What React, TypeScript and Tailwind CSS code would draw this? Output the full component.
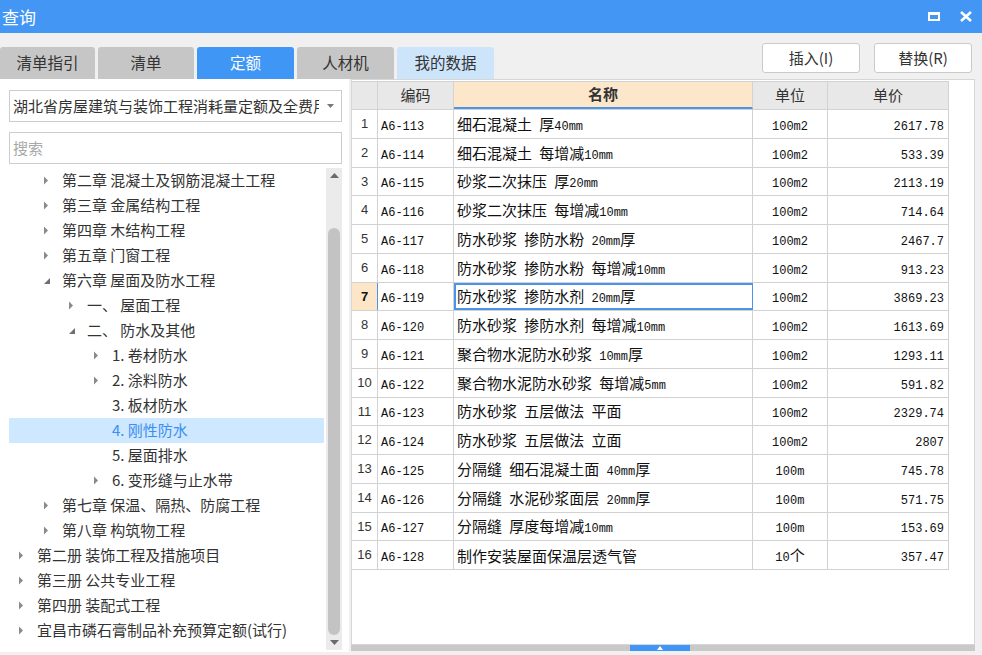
import type { ReactNode } from 'react';

type TreeNode = {
    level: number;
    text: string;
    arrow?: 'right' | 'down';
    selected?: boolean;
};

type Row = [string, string, string, string];

const tabs = [
    { label: '清单指引', width: 'w-[95px]', tone: 'gray' },
    { label: '清单', width: 'w-[96px]', tone: 'gray' },
    { label: '定额', width: 'w-[97px]', tone: 'active' },
    { label: '人材机', width: 'w-[97px]', tone: 'gray' },
    { label: '我的数据', width: 'w-[97px]', tone: 'light' },
];

const tree: TreeNode[] = [
    { level: 1, text: '第二章 混凝土及钢筋混凝土工程', arrow: 'right' },
    { level: 1, text: '第三章 金属结构工程', arrow: 'right' },
    { level: 1, text: '第四章 木结构工程', arrow: 'right' },
    { level: 1, text: '第五章 门窗工程', arrow: 'right' },
    { level: 1, text: '第六章 屋面及防水工程', arrow: 'down' },
    { level: 2, text: '一、 屋面工程', arrow: 'right' },
    { level: 2, text: '二、 防水及其他', arrow: 'down' },
    { level: 3, text: '1. 卷材防水', arrow: 'right' },
    { level: 3, text: '2. 涂料防水', arrow: 'right' },
    { level: 3, text: '3. 板材防水' },
    { level: 3, text: '4. 刚性防水', selected: true },
    { level: 3, text: '5. 屋面排水' },
    { level: 3, text: '6. 变形缝与止水带', arrow: 'right' },
    { level: 1, text: '第七章 保温、隔热、防腐工程', arrow: 'right' },
    { level: 1, text: '第八章 构筑物工程', arrow: 'right' },
    { level: 0, text: '第二册 装饰工程及措施项目', arrow: 'right' },
    { level: 0, text: '第三册 公共专业工程', arrow: 'right' },
    { level: 0, text: '第四册 装配式工程', arrow: 'right' },
    { level: 0, text: '宜昌市磷石膏制品补充预算定额(试行)', arrow: 'right' },
];

const rows: Row[] = [
    ['A6-113', '细石混凝土 厚40mm', '100m2', '2617.78'],
    ['A6-114', '细石混凝土 每增减10mm', '100m2', '533.39'],
    ['A6-115', '砂浆二次抹压 厚20mm', '100m2', '2113.19'],
    ['A6-116', '砂浆二次抹压 每增减10mm', '100m2', '714.64'],
    ['A6-117', '防水砂浆 掺防水粉 20mm厚', '100m2', '2467.7'],
    ['A6-118', '防水砂浆 掺防水粉 每增减10mm', '100m2', '913.23'],
    ['A6-119', '防水砂浆 掺防水剂 20mm厚', '100m2', '3869.23'],
    ['A6-120', '防水砂浆 掺防水剂 每增减10mm', '100m2', '1613.69'],
    ['A6-121', '聚合物水泥防水砂浆 10mm厚', '100m2', '1293.11'],
    ['A6-122', '聚合物水泥防水砂浆 每增减5mm', '100m2', '591.82'],
    ['A6-123', '防水砂浆 五层做法 平面', '100m2', '2329.74'],
    ['A6-124', '防水砂浆 五层做法 立面', '100m2', '2807'],
    ['A6-125', '分隔缝 细石混凝土面 40mm厚', '100m', '745.78'],
    ['A6-126', '分隔缝 水泥砂浆面层 20mm厚', '100m', '571.75'],
    ['A6-127', '分隔缝 厚度每增减10mm', '100m', '153.69'],
    ['A6-128', '制作安装屋面保温层透气管', '10个', '357.47'],
];

const indent = ['pl-[18px]', 'pl-[43px]', 'pl-[68px]', 'pl-[93px]'];

// ascii runs in the narrow grid font, CJK in the sans
function Mixed({ text }: { text: string }) {
    const parts = text.split(/([\x20-\x7e]+)/).filter(Boolean);
    return (
        <span className="whitespace-pre leading-none">
            {parts.map((p, i) =>
                /^[\x20-\x7e]+$/.test(p) ? (
                    <span key={i} className="font-['Liberation_Mono',monospace] text-[12px]">
                        {p}
                    </span>
                ) : (
                    <span key={i} className="text-[15px]">
                        {p}
                    </span>
                ),
            )}
        </span>
    );
}

function TreeArrow({ dir }: { dir?: 'right' | 'down' }) {
    if (!dir) return <span className="w-[19px] shrink-0" />;
    return (
        <span className="w-[19px] shrink-0 flex items-center">
            {dir === 'right' ? (
                <svg width="6" height="9" viewBox="0 0 6 9">
                    <path d="M1 0.5 L5 4.5 L1 8.5 Z" fill="#8a8a8a" />
                </svg>
            ) : (
                <svg width="8" height="8" viewBox="0 0 8 8">
                    <path d="M7 1 L7 7 L1 7 Z" fill="#6f6f6f" />
                </svg>
            )}
        </span>
    );
}

function HeadCell({ children, className }: { children?: ReactNode; className: string }) {
    return (
        <div
            className={`h-full flex items-center justify-center border-r border-[#d2d2d2] text-[15px] text-[#333] ${className}`}
        >
            {children}
        </div>
    );
}

export default function App() {
    return (
        <div className="w-[982px] h-[655px] overflow-hidden bg-[#f0f0f0] flex flex-col font-['Noto_Sans_CJK_SC',sans-serif] text-[#333]">
            {/* title bar */}
            <div className="h-[33px] shrink-0 bg-[#4396f3] flex items-center justify-between">
                <span className="pl-[2px] text-[17px] text-white leading-none">查询</span>
                <div className="flex items-center gap-[20px] pr-[10px]">
                    <svg width="12" height="9" viewBox="0 0 12 9">
                        <rect x="1" y="1.5" width="10" height="6.5" fill="none" stroke="#fff" strokeWidth="2" />
                        <rect x="0" y="0" width="12" height="3" fill="#fff" />
                    </svg>
                    <svg width="12" height="11" viewBox="0 0 12 11">
                        <path d="M1 1 L11 10 M11 1 L1 10" stroke="#fff" strokeWidth="2.6" />
                    </svg>
                </div>
            </div>

            {/* tabs and actions */}
            <div className="h-[46px] shrink-0 flex justify-between">
                <div className="self-end flex gap-[3px]">
                    {tabs.map((t) => (
                        <div
                            key={t.label}
                            className={`${t.width} h-[32px] rounded-t-[3px] flex items-center justify-center text-[15.5px] ${
                                t.tone === 'active'
                                    ? 'bg-[#3f96f5] text-white'
                                    : t.tone === 'light'
                                      ? 'bg-[#cde5fb] text-[#333]'
                                      : 'bg-[#c6c6c6] text-[#333]'
                            }`}
                        >
                            {t.label}
                        </div>
                    ))}
                </div>
                <div className="self-start mt-[10px] mr-[10px] flex gap-[14px]">
                    <button className="w-[98px] h-[30px] bg-white border border-[#cacaca] rounded-[3px] text-[15px] text-[#333]">
                        插入(I)
                    </button>
                    <button className="w-[98px] h-[30px] bg-white border border-[#cacaca] rounded-[3px] text-[15px] text-[#333]">
                        替换(R)
                    </button>
                </div>
            </div>

            <div className="flex flex-1 min-h-0">
                {/* left: library and chapter tree */}
                <div className="w-[349px] h-[573px] bg-white flex flex-col pt-[11px] pl-[9px] pr-[7px]">
                    <div className="h-[32px] shrink-0 border border-[#cdcdcd] flex items-center pl-[3px] pr-[7px]">
                        <span className="flex-1 overflow-hidden whitespace-nowrap text-[15px] text-[#333]">
                            湖北省房屋建筑与装饰工程消耗量定额及全费用
                        </span>
                        <svg width="7" height="4" viewBox="0 0 7 4" className="ml-[8px]">
                            <path d="M0 0 L7 0 L3.5 4 Z" fill="#777" />
                        </svg>
                    </div>
                    <div className="h-[32px] mt-[10px] shrink-0 border border-[#cdcdcd] flex items-center pl-[3px] text-[15px] text-[#a8a8a8]">
                        搜索
                    </div>
                    <div className="flex-1 min-h-0 mt-[4px] flex gap-[2px]">
                        <div className="flex-1 -ml-[9px]">
                            {tree.map((n) => (
                                <div
                                    key={n.text}
                                    className={`h-[25px] flex items-center ${indent[n.level]} ${
                                        n.selected ? 'bg-[#cde8ff] ml-[9px] !pl-[84px]' : ''
                                    }`}
                                >
                                    <TreeArrow dir={n.arrow} />
                                    <span
                                        className={`text-[15px] whitespace-pre ${
                                            n.selected ? 'text-[#3d8ef2]' : 'text-[#333]'
                                        }`}
                                    >
                                        {n.text}
                                    </span>
                                </div>
                            ))}
                        </div>
                        <div className="w-[16px] h-[482px] bg-[#ebebeb] flex flex-col items-center">
                            <svg width="9" height="5" viewBox="0 0 9 5" className="mt-[5px]">
                                <path d="M0 5 L4.5 0 L9 5 Z" fill="#6a6a6a" />
                            </svg>
                            <div className="w-[12px] h-[407px] mt-[50px] rounded-full bg-[#c3c3c3]" />
                            <svg width="9" height="5" viewBox="0 0 9 5" className="mt-[5px]">
                                <path d="M0 0 L9 0 L4.5 5 Z" fill="#6a6a6a" />
                            </svg>
                        </div>
                    </div>
                </div>

                {/* right: quota grid */}
                <div className="ml-[2px] w-[624px] flex flex-col">
                    <div className="h-[566px] bg-white border border-[#d6d6d6] pt-[1px] flex flex-col">
                        <div className="w-[597px] border-t border-[#d2d2d2]">
                            <div className="h-[28px] flex bg-[#e8e8e8] border-b border-[#d2d2d2]">
                                <HeadCell className="w-[26px]" />
                                <HeadCell className="w-[76px]">编码</HeadCell>
                                <HeadCell className="w-[299px] bg-[#fde7cb] !border-b-2 border-b-[#4a94ea] font-bold text-[#222]">
                                    名称
                                </HeadCell>
                                <HeadCell className="w-[75px]">单位</HeadCell>
                                <HeadCell className="w-[121px]">单价</HeadCell>
                            </div>
                            {rows.map((r, i) => {
                                const sel = i === 6;
                                return (
                                    <div key={r[0]} className="h-[28.75px] flex border-b border-[#d2d2d2] text-[#111]">
                                        <div
                                            className={`w-[26px] flex items-center justify-center font-['Liberation_Sans',sans-serif] text-[13px] ${
                                                sel
                                                    ? 'bg-[#fde5c8] font-bold border-r border-[#4a94ea]'
                                                    : 'border-r border-[#d2d2d2] text-[#333]'
                                            }`}
                                        >
                                            {i + 1}
                                        </div>
                                        <div className="w-[76px] flex items-center pl-[3px] border-r border-[#d2d2d2]">
                                            <Mixed text={r[0]} />
                                        </div>
                                        <div
                                            className={`w-[299px] flex items-center whitespace-nowrap border-r ${
                                                sel
                                                    ? 'pl-[1px] border-2 border-[#4a94ea]'
                                                    : 'pl-[3px] border-[#d2d2d2]'
                                            }`}
                                        >
                                            <Mixed text={r[1]} />
                                        </div>
                                        <div className="w-[75px] flex items-center justify-center border-r border-[#d2d2d2]">
                                            <Mixed text={r[2]} />
                                        </div>
                                        <div className="w-[121px] flex items-center justify-end pr-[4px] border-r border-[#d2d2d2]">
                                            <Mixed text={r[3]} />
                                        </div>
                                    </div>
                                );
                            })}
                        </div>
                    </div>
                    <div className="h-[6px] bg-[#c9c9c9] flex">
                        <div className="ml-[279px] w-[60px] h-full bg-[#3f96f5] flex items-center justify-center">
                            <svg width="6" height="4" viewBox="0 0 6 4">
                                <path d="M0 4 L3 0 L6 4 Z" fill="#fff" />
                            </svg>
                        </div>
                    </div>
                </div>
            </div>
        </div>
    );
}
